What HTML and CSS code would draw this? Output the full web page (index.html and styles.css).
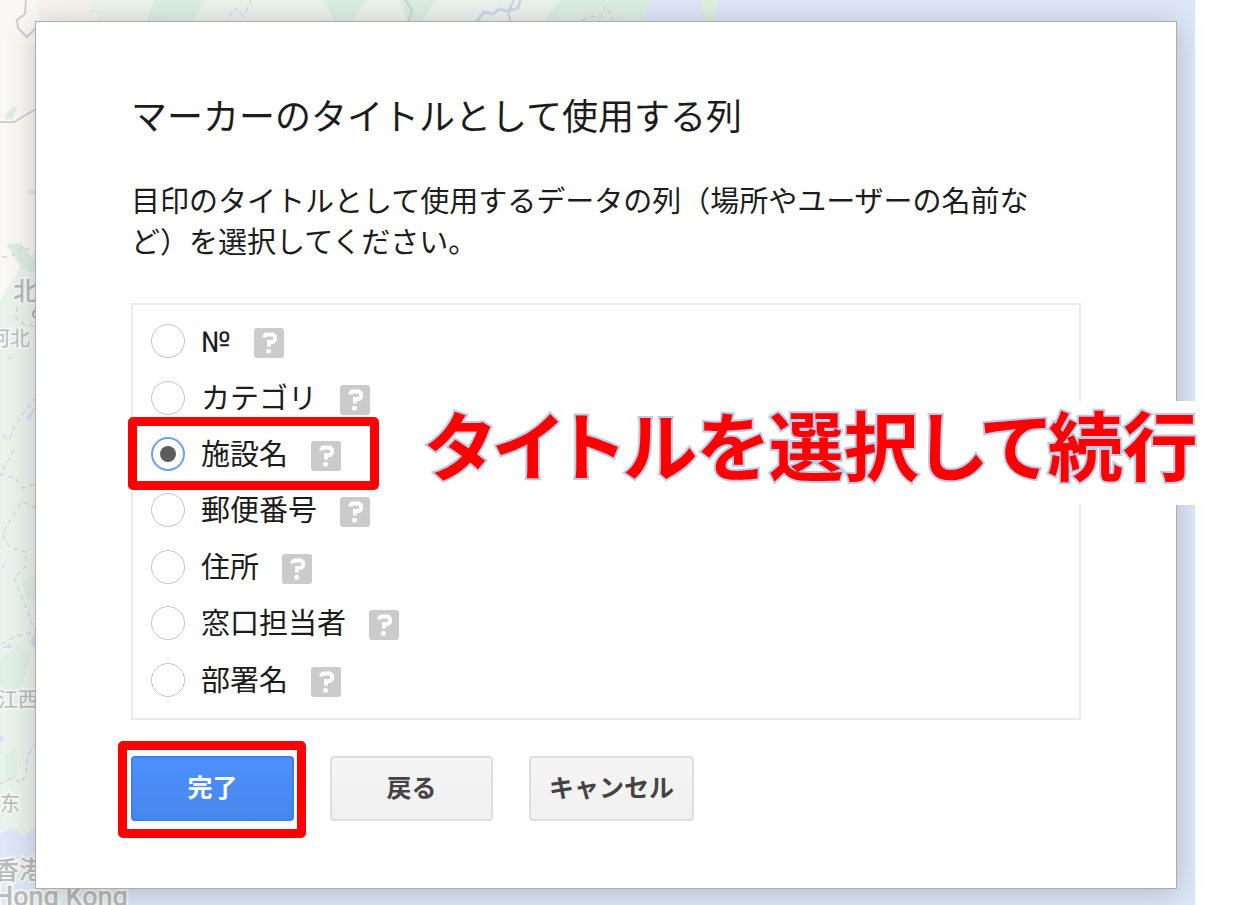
FILE: index.html
```html
<!DOCTYPE html>
<html lang="ja">
<head>
<meta charset="utf-8">
<meta name="viewport" content="width=device-width, initial-scale=1">
<title>マーカーのタイトルとして使用する列</title>
<link rel="stylesheet" href="styles.css">
</head>
<body>
<svg width="0" height="0" class="sprite" aria-hidden="true">
  <symbol id="help" viewBox="0 0 30 30">
    <rect width="30" height="30" rx="3" fill="#cbcbcb"/>
    <path d="M10.5 9.5V8L12 6.500H19L21 8.500V12L19 14H15V18.500" fill="none" stroke="#fff" stroke-width="4"/>
    <circle cx="14.500" cy="23.300" r="2.500" fill="#fff"/>
  </symbol>
</svg>
<main class="stage">
  <svg class="map" viewBox="0 0 1195 905" preserveAspectRatio="xMinYMin slice" aria-hidden="true">
    <rect width="1195" height="905" fill="#dde7f8"/>
    <path d="M0 0H650L640 24L600 60L300 300L200 700L60 905V835L40 828L20 836L10 828L0 834Z" fill="#e9f3ec"/>
    <path d="M0 0H93L88 10L98 16L90 30L36 60V252L22 262L16 275L0 300Z" fill="#faf8f5"/>
    <path d="M36 0H93L88 8L98 20H40Z" fill="#f6f2ee"/>
    <path d="M155 0H205L190 24H145Z M322 0H366L350 24H334L330 10Z M400 0H436L420 24H408Z M560 0H652L640 22H542Z" fill="#dceee1"/>
    <path d="M7 112L17 106L13 118L5 120Z M25 192L36 189V196Z M6 244L20 243L36 262V275L22 268Z" fill="#dceee1"/>
    <path d="M0 660L18 645L30 655L20 690L0 700Z M5 755L15 748L18 775L5 785Z M22 580L36 575V600H26Z" fill="#e0f0e4"/>
    <path d="M700 0H718L713 24H706Z" fill="#dff0df"/>
    <path d="M0 834L14 828L22 836L36 828V905H0Z" fill="#dde7f8"/>
    <path d="M0 570L6 559L3 568Z M2 648L10 643L12 648Z M30 642L36 630V650Z M26 418L36 406L30 420Z M0 735L4 738L0 742Z M7 358L14 355L10 360Z" fill="#d3dff8"/>
    <g fill="none" stroke="#cfd1d1" stroke-width="2">
      <path d="M26 0L25 14L17 20L18 28L27 37L36 28"/>
      <path d="M0 122H14L36 109"/>
      <path d="M405 0L412 10L408 24 M514 0L508 12L511 24"/>
    </g>
    <path d="M475 24L484 12L493 14L499 9L508 11L518 8L520 0" fill="none" stroke="#ccd7ee" stroke-width="3"/>
    <g fill="none" stroke="#c8cdca" stroke-width="1" stroke-dasharray="5 4">
      <path d="M2 257L12 256L22 247L36 252"/>
      <path d="M17 307L16 318L25 325L36 326"/>
      <path d="M36 397L24 412L14 428L9 440L0 434"/>
      <path d="M14 450L0 474L15 478L22 488L36 484"/>
      <path d="M36 508L22 502L10 520L2 534L10 548L26 552V566L14 578L24 602L33 626L36 632L16 636L0 645"/>
      <path d="M36 743L28 755L26 772L22 783L12 778L0 784"/>
      <path d="M225 24L235 8L247 20 M246 12L251 0 M582 20L592 16L600 18L606 6L613 20"/>
    </g>
    <circle cx="37" cy="314" r="4" fill="#fff" stroke="#a9adab" stroke-width="2"/>
    <g class="map-text">
      <text x="13" y="300" font-size="25">北京</text>
      <text class="minor" x="-10" y="346" font-size="20">河北</text>
      <text class="minor" x="-2" y="707" font-size="20">江西</text>
      <text class="minor" x="0" y="811" font-size="20">东</text>
      <text x="-6" y="879" font-size="25">香港</text>
      <text x="-6" y="906" font-size="27">Hong Kong</text>
    </g>
  </svg>

  <form class="dialog" role="dialog" aria-labelledby="dialog-title">
    <h1 id="dialog-title" class="title">マーカーのタイトルとして使用する列</h1>
    <p class="lead">目印のタイトルとして使用するデータの列（場所やユーザーの名前など）を選択してください。</p>

    <fieldset class="options" aria-labelledby="dialog-title">
      <div class="list">
        <div class="option"><input type="radio" name="col" id="c1"><label for="c1">№</label><button type="button" class="help" aria-label="ヘルプ"><svg><use href="#help"/></svg></button></div>
        <div class="option"><input type="radio" name="col" id="c2"><label for="c2">カテゴリ</label><button type="button" class="help" aria-label="ヘルプ"><svg><use href="#help"/></svg></button></div>
        <div class="option marked"><input type="radio" name="col" id="c3" checked><label for="c3">施設名</label><button type="button" class="help" aria-label="ヘルプ"><svg><use href="#help"/></svg></button></div>
        <div class="option"><input type="radio" name="col" id="c4"><label for="c4">郵便番号</label><button type="button" class="help" aria-label="ヘルプ"><svg><use href="#help"/></svg></button></div>
        <div class="option"><input type="radio" name="col" id="c5"><label for="c5">住所</label><button type="button" class="help" aria-label="ヘルプ"><svg><use href="#help"/></svg></button></div>
        <div class="option"><input type="radio" name="col" id="c6"><label for="c6">窓口担当者</label><button type="button" class="help" aria-label="ヘルプ"><svg><use href="#help"/></svg></button></div>
        <div class="option"><input type="radio" name="col" id="c7"><label for="c7">部署名</label><button type="button" class="help" aria-label="ヘルプ"><svg><use href="#help"/></svg></button></div>
      </div>
      <strong class="note">タイトルを選択して続行</strong>
    </fieldset>

    <div class="actions">
      <span class="marked"><button type="button" class="btn primary">完了</button></span>
      <button type="button" class="btn">戻る</button>
      <button type="button" class="btn">キャンセル</button>
    </div>
  </form>
</main>
</body>
</html>
```
FILE: styles.css
```css
* {
  box-sizing: border-box;
}

body {
  margin: 0;
  background: #fff;
  color: #1c1c1c;
  font-family: Roboto, "Noto Sans CJK JP", sans-serif;
  overflow-x: hidden;
}

.sprite {
  position: absolute;
}

.stage {
  position: relative;
  min-height: 100vh;
  padding: 21px 63px 16px 35px;
  overflow: hidden;
}

.map {
  position: absolute;
  top: 0;
  left: 0;
  width: calc(100% - 45px);
  height: 100%;
}

.map-text {
  fill: #b9bbba;
  font-weight: 500;
  stroke: #f4f7f5;
  stroke-width: 4px;
  paint-order: stroke;
}

.map-text .minor {
  font-weight: 400;
}

.dialog {
  position: relative;
  padding: 72px 95px 67px;
  background: #fff;
  border: 1px solid #acacac;
  box-shadow: 0 4px 28px rgba(0, 0, 0, 0.2);
}

.title {
  margin: 0 0 40px;
  font-size: 36px;
  font-weight: 400;
  line-height: 48px;
}

.lead {
  margin: 0 0 39px;
  padding-right: 16px;
  font-size: 29px;
  line-height: 41px;
}

.options {
  position: relative;
  min-width: 0;
  margin: 0 0 36px;
  padding: 0;
  border: 2px solid #ebebeb;
}

.list {
  display: flex;
  flex-direction: column;
  min-height: 413px;
  padding: 8px 18px 10px;
}

.option {
  display: flex;
  flex: 1;
  align-items: center;
  align-self: flex-start;
  font-size: 29px;
  line-height: 40px;
}

.option label {
  padding-top: 2px;
}

.option input {
  display: grid;
  place-items: center;
  width: 34px;
  height: 34px;
  margin: 0 16px 0 0;
  appearance: none;
  background: #fff;
  border: 1px solid #c6c6c6;
  border-radius: 50%;
}

.option input:checked {
  border: 2px solid #6ba3fb;
}

.option input:checked::after {
  content: "";
  width: 16px;
  height: 16px;
  background: #5c5c5c;
  border-radius: 50%;
}

.help {
  display: flex;
  margin: 4px 0 0 23px;
  padding: 0;
  background: none;
  border: 0;
}

.help svg {
  width: 30px;
  height: 30px;
}

.marked {
  position: relative;
}

.marked::after {
  content: "";
  position: absolute;
  inset: -15px -12px -17px -13px;
  border: 9px solid #f00;
  border-radius: 5px;
  pointer-events: none;
}

.option.marked::after {
  inset: -9px -38px -8px -23px;
}

.note {
  position: absolute;
  top: 96px;
  right: -159px;
  left: 258px;
  height: 104px;
  padding-left: 34px;
  background: #fff;
  color: #f00;
  font-size: 75px;
  font-weight: 700;
  line-height: 96px;
  font-feature-settings: "palt";
  white-space: nowrap;
  -webkit-text-stroke: 4px #bccbe6;
  paint-order: stroke fill;
}

.actions {
  display: flex;
  flex-wrap: wrap;
  gap: 36px;
}

.btn {
  display: block;
  min-width: 163px;
  height: 65px;
  padding: 0 18px 6px;
  background: linear-gradient(#f5f5f5, #f0f0f0);
  border: 2px solid #dedede;
  border-radius: 4px;
  color: #444;
  font-family: inherit;
  font-size: 25px;
  font-weight: 700;
}

.primary {
  background: linear-gradient(#4d90fe, #4787ed);
  border-color: #3b7ff0;
  color: #fff;
}
```
